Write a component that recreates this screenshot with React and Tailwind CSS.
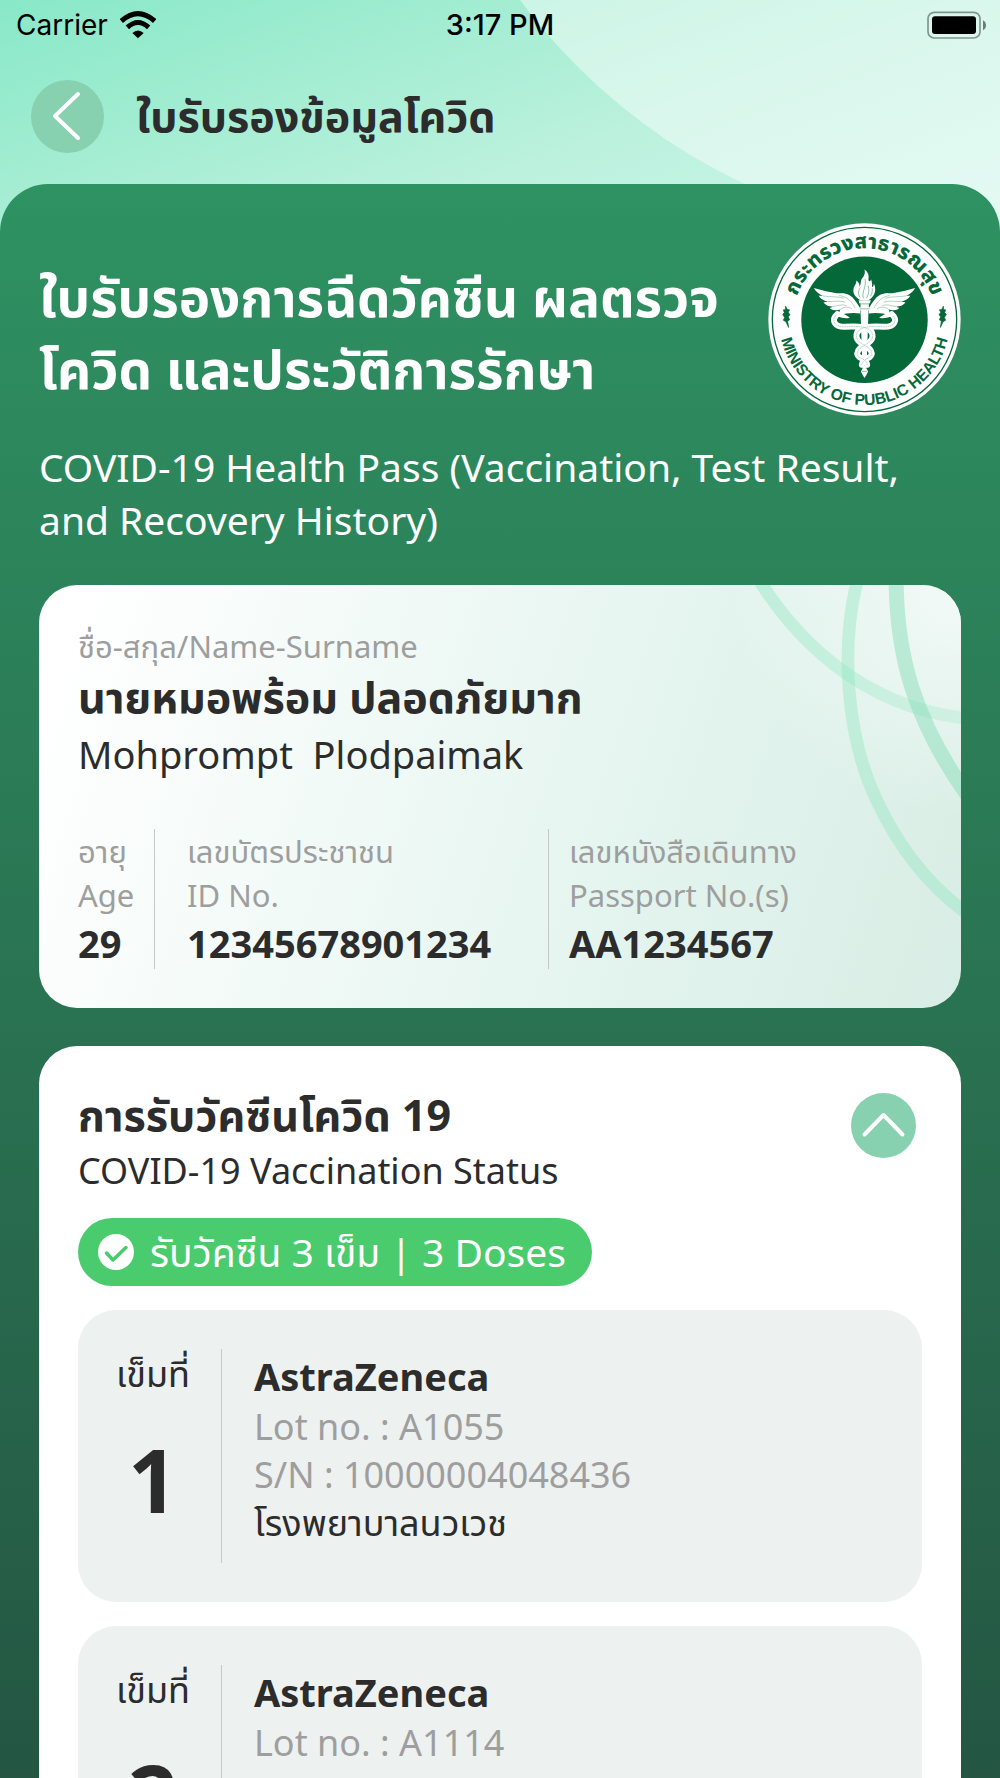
import { useState } from 'react';

const person = {
  nameTh: 'นายหมอพร้อม ปลอดภัยมาก',
  nameEn: 'Mohprompt  Plodpaimak',
  age: '29',
  idNo: '12345678901234',
  passport: 'AA1234567',
};

const doses = [
  { no: 1, brand: 'AstraZeneca', lot: 'A1055', sn: '10000004048436', place: 'โรงพยาบาลนวเวช' },
  { no: 2, brand: 'AstraZeneca', lot: 'A1114' },
];

const StatusBar = () => (
  <div className="grid grid-cols-3 items-center h-[50px] px-4 text-[28px] leading-9 text-black font-[Inter,sans-serif]">
    <div className="flex items-center gap-3">
      <span>Carrier</span>
      <svg className="w-9 h-7" viewBox="0 0 108 84" fill="none">
        <path d="M4 30 Q54 -14 104 30" stroke="black" strokeWidth="15" />
        <path d="M22 49 Q54 20 86 49" stroke="black" strokeWidth="15" />
        <path d="M37 66 Q54 51 71 66 L54 82 Z" fill="black" />
      </svg>
    </div>
    <span className="text-center text-[29px] font-medium">3:17 PM</span>
    <svg className="w-[59px] h-7 -mr-0.5 justify-self-end" viewBox="0 0 177 84" fill="none">
      <rect x="3" y="4" width="156" height="77" rx="19" stroke="black" strokeOpacity="0.4" strokeWidth="5" />
      <rect x="15" y="16" width="132" height="53" rx="9" fill="black" />
      <path d="M168 28 Q177 33 177 43 Q177 53 168 58 Z" fill="black" fillOpacity="0.5" />
    </svg>
  </div>
);

const Wing = () => (
  <g>
    <path
      d="M331 294 C320 276 312 262 298 254 C284 246 268 250 256 248 C236 245 214 240 192 233 C198 245 208 252 219 257 C213 257 209 257 206 256 C212 267 222 272 233 274 C228 276 224 276 221 276 C227 286 238 289 248 289 C245 292 242 293 239 293 C248 304 264 300 272 297 C268 303 267 309 270 314 C286 309 312 306 331 310 Z"
      fill="white"
    />
    <g stroke="#8fbda3" strokeWidth="2" fill="none">
      <path d="M219 257 C240 261 262 258 282 264" />
      <path d="M233 274 C252 275 270 270 286 276" />
      <path d="M248 289 C264 287 276 281 290 286" />
      <path d="M272 297 C282 290 294 288 306 296" />
      <path d="M268 256 C290 258 306 274 316 294" />
    </g>
  </g>
);

const MinistryLogo = () => (
  <svg className="w-[193px] h-[193px] shrink-0" viewBox="54 38 580 580" role="img" aria-label="Ministry of Public Health">
    <defs>
      <path id="arc-top" d="M130 328 A214 214 0 0 1 558 328" />
      <path id="arc-bottom" d="M87 328 A257 257 0 0 0 601 328" />
    </defs>
    <circle cx="344" cy="328" r="289" fill="white" />
    <circle cx="344" cy="328" r="277" fill="none" stroke="#056839" strokeWidth="4" />
    <circle cx="344" cy="329" r="190" fill="#056839" />
    <text fill="#056839" fontSize="62" fontWeight="800" textAnchor="middle" fontFamily="'Noto Sans Thai', 'Noto Sans', sans-serif">
      <textPath href="#arc-top" startOffset="50%">กระทรวงสาธารณสุข</textPath>
    </text>
    <text fill="#056839" fontSize="47" fontWeight="700" textAnchor="middle" fontFamily="'Liberation Sans', sans-serif">
      <textPath href="#arc-bottom" startOffset="50%">MINISTRY OF PUBLIC HEALTH</textPath>
    </text>
    <g fill="#056839" stroke="#056839" strokeWidth="2">
      <path d="M107 288 L112 298 L119 299 L115 306 L120 314 L115 320 L119 329 L113 333 L116 352 L108 335 L100 330 L104 322 L98 313 L103 307 L100 299 L106 299 Z" />
      <path d="M581 288 L576 298 L569 299 L573 306 L568 314 L573 320 L569 329 L575 333 L572 352 L580 335 L588 330 L584 322 L590 313 L585 307 L588 299 L582 299 Z" />
    </g>
    <Wing />
    <g transform="matrix(-1 0 0 1 688 0)">
      <Wing />
    </g>
    {/* flame */}
    <path
      d="M332 270 C318 262 308 250 311 236 C313 225 321 221 319 211 C328 217 330 224 329 230 C335 220 330 210 340 200 C345 194 346 187 344 178 C355 186 358 196 356 205 C355 214 361 216 364 208 C367 218 368 224 366 231 C371 230 372 225 372 220 C380 236 378 256 357 270 Z"
      fill="white"
    />
    <g stroke="#5b9b78" strokeWidth="2" fill="none">
      <path d="M331 262 C322 250 326 240 332 232" />
      <path d="M341 264 C334 248 350 232 346 206" />
      <path d="M350 264 C358 250 358 238 355 226" />
      <path d="M362 258 C368 248 368 240 367 234" />
    </g>
    {/* staff */}
    <path d="M326 270 H363 L360 280 H357 V292 H361 V300 H356 L350 476 L355 484 L350 494 L344 504 L338 494 L333 484 L338 476 L332 300 H328 V292 H332 V280 H329 Z" fill="white" />
    <path d="M327 281 H362 M329 296 H360 M336 484 H352" stroke="#5b9b78" strokeWidth="2" />
    {/* snakes */}
    <g fill="none" strokeLinecap="round">
      <g stroke="white" strokeWidth="18">
        <path d="M262 312 C242 330 254 350 284 350 C318 348 364 346 368 374 C372 404 324 404 322 430 C321 446 350 444 352 464" />
        <path d="M426 312 C446 330 434 350 404 350 C370 348 324 346 320 374 C316 404 364 404 366 430 C367 446 338 444 336 464" />
      </g>
      <g stroke="#8fbda3" strokeWidth="2" strokeDasharray="3 4">
        <path d="M262 312 C242 330 254 350 284 350 C318 348 364 346 368 374 C372 404 324 404 322 430 C321 446 350 444 352 464" />
        <path d="M426 312 C446 330 434 350 404 350 C370 348 324 346 320 374 C316 404 364 404 366 430 C367 446 338 444 336 464" />
      </g>
    </g>
    <path d="M254 312 C256 300 268 304 286 314 L300 322 C288 328 276 322 266 320 Z" fill="white" />
    <path d="M434 312 C432 300 420 304 402 314 L388 322 C400 328 412 322 422 320 Z" fill="white" />
  </svg>
);

const CardCurves = () => (
  <svg className="absolute top-0 right-0 w-[261px] h-[422px]" viewBox="0 45 784 1267" fill="none" aria-hidden="true">
    <defs>
      <linearGradient id="fade" x1="165" y1="0" x2="800" y2="0" gradientUnits="userSpaceOnUse">
        <stop offset="0" stopColor="#8ce6bf" stopOpacity="0.42" />
        <stop offset="1" stopColor="#8ce6bf" stopOpacity="0.25" />
      </linearGradient>
    </defs>
    <path d="M165 10 C280 200 480 410 800 445" stroke="url(#fade)" strokeWidth="38" />
    <path d="M475 20 C420 230 440 500 530 690 C600 840 690 950 800 1030" stroke="#8ce6bf" strokeOpacity="0.4" strokeWidth="38" />
    <path d="M589 20 C589 250 640 450 810 685" stroke="#7fdcb4" strokeOpacity="0.45" strokeWidth="45" />
  </svg>
);

const Field = ({ th, en, value, className = '' }) => (
  <div className={className}>
    <dt className="text-[31px] leading-[44px] text-[#9e9e9e]">
      {th}
      <br />
      {en}
    </dt>
    <dd className="text-[38px] leading-[52px] font-bold">{value}</dd>
  </div>
);

const PersonCard = () => (
  <section className="relative overflow-hidden rounded-[38px] p-[39px] mt-[39px] bg-[linear-gradient(108deg,#ffffff_4%,#e3f4ee_66%,#d8ede5_100%)]">
    <div className="absolute top-0 right-0 w-60 h-60 bg-[radial-gradient(circle_at_top_right,#f3faf7,transparent_68%)]"></div>
    <CardCurves />
    <div className="relative">
      <p className="text-[31px] leading-[44px] text-[#9e9e9e]">ชื่อ-สกุล/Name-Surname</p>
      <h2 className="text-[43px] leading-[58px] font-bold">{person.nameTh}</h2>
      <p className="text-[38px] leading-[56px] whitespace-pre">{person.nameEn}</p>
      <dl className="grid grid-cols-[77px_394px_1fr] mt-[47px]">
        <Field th="อายุ" en="Age" value={person.age} className="border-r border-[#c4c9c7]" />
        <Field th="เลขบัตรประชาชน" en="ID No." value={person.idNo} className="pl-8 border-r border-[#c4c9c7]" />
        <Field th="เลขหนังสือเดินทาง" en="Passport No.(s)" value={person.passport} className="pl-5" />
      </dl>
    </div>
  </section>
);

const DoseCard = ({ dose }) => (
  <li className="flex rounded-[38px] bg-[#edf1f0] p-[39px]">
    <div className="flex flex-col items-center w-[105px] min-h-[214px] pr-8 border-r border-[#c4c9c7]">
      <div className="text-[36px] leading-[50px] whitespace-nowrap">เข็มที่</div>
      <div className="mt-8 text-[87px] leading-[96px] font-bold">{dose.no}</div>
    </div>
    <div className="pl-8">
      <h3 className="text-[38px] leading-[54px] font-bold">{dose.brand}</h3>
      <p className="text-[36px] leading-[48px] text-[#9e9e9e]">Lot no. : {dose.lot}</p>
      {dose.sn && <p className="text-[36px] leading-[48px] text-[#9e9e9e]">S/N : {dose.sn}</p>}
      {dose.place && <p className="text-[36px] leading-[48px]">{dose.place}</p>}
    </div>
  </li>
);

const VaccineCard = () => {
  const [open, setOpen] = useState(true);

  return (
    <section className="rounded-[38px] bg-white p-[39px] mt-[38px]">
      <div className="flex items-start justify-between">
        <div>
          <h2 className="text-[43px] leading-[60px] font-bold">การรับวัคซีนโควิด 19</h2>
          <p className="text-[36px] leading-[52px]">COVID-19 Vaccination Status</p>
        </div>
        <button
          type="button"
          aria-label="Toggle doses"
          aria-expanded={open}
          onClick={() => setOpen(!open)}
          className="w-[65px] h-[65px] mt-2 mr-1.5 rounded-full bg-[#87d0b0]"
        >
          <svg viewBox="0 0 65 65" fill="none" stroke="white" strokeWidth="4" strokeLinecap="round" strokeLinejoin="round">
            <path d={open ? 'M13.5 41.5 L32.5 22 L51.5 41.5' : 'M13.5 24 L32.5 43 L51.5 24'} />
          </svg>
        </button>
      </div>
      <div className="inline-flex items-center gap-4 h-[68px] mt-[21px] pl-5 pr-[26px] rounded-full bg-[#4acb6e] text-white">
        <svg className="w-9 h-9" viewBox="0 0 36 36" fill="none">
          <circle cx="18" cy="18" r="18" fill="white" />
          <path d="M8.500 19 L15 26 L28 13.500" stroke="#4acb6e" strokeWidth="3.500" strokeLinecap="round" strokeLinejoin="round" />
        </svg>
        <span className="text-[39px] leading-[52px]">รับวัคซีน 3 เข็ม | 3 Doses</span>
      </div>
      {open && (
        <ul className="flex flex-col gap-6 mt-6">
          {doses.map((dose) => (
            <DoseCard key={dose.no} dose={dose} />
          ))}
        </ul>
      )}
    </section>
  );
};

const App = () => (
  <div className="relative h-screen overflow-hidden flex flex-col bg-[linear-gradient(160deg,#88e8c7_0px,#bcf1de_340px,#ccf6e9_540px)] text-[#2c2c2c] font-['Noto_Sans','Noto_Sans_Thai',sans-serif]">
    {/* Background decoration */}
    <div className="absolute -top-[944px] left-[404px] w-[1184px] h-[1184px] rounded-full bg-white/45"></div>

    <header className="relative pb-0.5">
      <StatusBar />
      <div className="flex items-center gap-8 h-[132px] px-[31px]">
        <button type="button" aria-label="Back" className="w-[73px] h-[73px] rounded-full bg-[#87d0b0]">
          <svg viewBox="0 0 73 73" fill="none" stroke="white" strokeWidth="4" strokeLinecap="round" strokeLinejoin="round">
            <path d="M47 14 L24 36 L47 58" />
          </svg>
        </button>
        <h1 className="text-[43px] leading-[58px] font-bold">ใบรับรองข้อมูลโควิด</h1>
      </div>
    </header>

    <main className="relative flex-1 min-h-0 overflow-y-auto [scrollbar-width:none] rounded-t-[48px] px-[39px] pb-10 bg-linear-to-b from-[#2e9262] to-[#245643]">
      <div className="flex items-start justify-between pt-[39px]">
        <h2 className="pt-[38px] text-[53px] leading-[72px] font-bold text-white">
          ใบรับรองการฉีดวัคซีน ผลตรวจ
          <br />
          โควิด และประวัติการรักษา
        </h2>
        <MinistryLogo />
      </div>
      <p className="mt-6 text-[39px] leading-[53px] text-white">
        COVID-19 Health Pass (Vaccination, Test Result, and Recovery History)
      </p>
      <PersonCard />
      <VaccineCard />
    </main>
  </div>
);

export default App;
